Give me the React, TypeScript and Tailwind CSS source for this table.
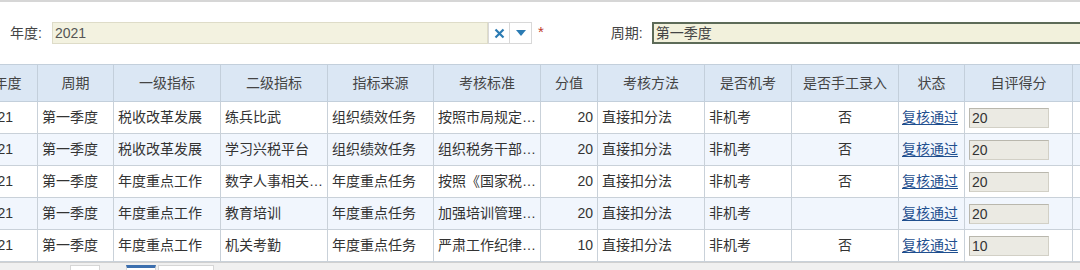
import React from "react";

interface Row {
  period: string;
  level1: string;
  level2: string;
  source: string;
  standard: string;
  score: number;
  method: string;
  machine: string;
  manual: string;
  status: string;
  self: string;
}

const ROWS: Row[] = [
  { period: "第一季度", level1: "税收改革发展", level2: "练兵比武", source: "组织绩效任务", standard: "按照市局规定…", score: 20, method: "直接扣分法", machine: "非机考", manual: "否", status: "复核通过", self: "20" },
  { period: "第一季度", level1: "税收改革发展", level2: "学习兴税平台", source: "组织绩效任务", standard: "组织税务干部…", score: 20, method: "直接扣分法", machine: "非机考", manual: "否", status: "复核通过", self: "20" },
  { period: "第一季度", level1: "年度重点工作", level2: "数字人事相关…", source: "年度重点任务", standard: "按照《国家税…", score: 20, method: "直接扣分法", machine: "非机考", manual: "否", status: "复核通过", self: "20" },
  { period: "第一季度", level1: "年度重点工作", level2: "教育培训", source: "年度重点任务", standard: "加强培训管理…", score: 20, method: "直接扣分法", machine: "非机考", manual: "", status: "复核通过", self: "20" },
  { period: "第一季度", level1: "年度重点工作", level2: "机关考勤", source: "年度重点任务", standard: "严肃工作纪律…", score: 10, method: "直接扣分法", machine: "非机考", manual: "否", status: "复核通过", self: "10" },
];

const HEADERS = ["年度", "周期", "一级指标", "二级指标", "指标来源", "考核标准", "分值", "考核方法", "是否机考", "是否手工录入", "状态", "自评得分", ""];
const WIDTHS = [60, 76, 107, 107, 106, 107, 57, 107, 87, 107, 66, 108, 60];

const FONT = "font-['Liberation_Sans','Noto_Sans_CJK_SC',sans-serif]";

export default function App() {
  return (
    <div className={`w-[1080px] h-[270px] overflow-hidden bg-white border-t-2 border-[#d6d6d6] flex flex-col text-[#333] ${FONT}`}>
      {/* query form */}
      <div className="h-[62px] shrink-0 flex items-center text-[14px]">
        <span className="ml-[10px] w-[42px] text-[#444]">年度:</span>
        <div className="w-[436px] h-[22px] bg-[#f3f2e0] border border-[#dedcc8] flex items-center pl-[2px] text-[14px] text-[#555]">
          2021
        </div>
        <button className="w-[22px] h-[22px] border border-[#d8d8d8] bg-white flex items-center justify-center">
          <svg width="11" height="11" viewBox="0 0 11 11">
            <path d="M1.5 1.5 L9.5 9.5 M9.5 1.5 L1.5 9.5" stroke="#2b7bb3" strokeWidth="2.2" />
          </svg>
        </button>
        <button className="w-[22px] h-[22px] border border-l-0 border-[#d8d8d8] bg-white flex items-center justify-center">
          <svg width="10" height="6" viewBox="0 0 10 6">
            <path d="M0 0 H10 L5 6 Z" fill="#2b7bb3" />
          </svg>
        </button>
        <span className="ml-[6px] text-[#c0392b] text-[15px] leading-none -mt-[4px]">*</span>
        <span className="ml-[67px] w-[41px] text-[#444]">周期:</span>
        <div className="flex-1 h-[22px] bg-[#f2f1dc] border-2 border-r-0 border-[#5d6b58] flex items-center pl-[2px] text-[14px] text-[#444]">
          第一季度
        </div>
      </div>

      {/* grid */}
      <div className="overflow-hidden shrink-0">
        <table className="table-fixed border-collapse ml-[-23px] text-[14px]" style={{ width: WIDTHS.reduce((a, b) => a + b, 0) }}>
          <colgroup>
            {WIDTHS.map((w, i) => (
              <col key={i} style={{ width: w }} />
            ))}
          </colgroup>
          <thead>
            <tr className="h-[37px] bg-[#dbe7f4]">
              {HEADERS.map((h, i) => (
                <th key={i} className="border border-[#c3cfdb] font-normal text-center text-[#444] whitespace-nowrap">
                  {h}
                </th>
              ))}
            </tr>
          </thead>
          <tbody>
            {ROWS.map((r, i) => (
              <tr key={i} className={`h-[32px] ${i % 2 === 1 ? "bg-[#f1f6fd]" : "bg-white"}`}>
                <td className="border border-[#c9d1d9] px-[4px]">2021</td>
                <td className="border border-[#c9d1d9] px-[4px] whitespace-nowrap">{r.period}</td>
                <td className="border border-[#c9d1d9] px-[4px] whitespace-nowrap">{r.level1}</td>
                <td className="border border-[#c9d1d9] px-[4px] whitespace-nowrap overflow-hidden">{r.level2}</td>
                <td className="border border-[#c9d1d9] px-[4px] whitespace-nowrap">{r.source}</td>
                <td className="border border-[#c9d1d9] px-[4px] whitespace-nowrap overflow-hidden">{r.standard}</td>
                <td className="border border-[#c9d1d9] px-[4px] text-right">{r.score}</td>
                <td className="border border-[#c9d1d9] px-[4px] whitespace-nowrap">{r.method}</td>
                <td className="border border-[#c9d1d9] px-[4px] whitespace-nowrap">{r.machine}</td>
                <td className="border border-[#c9d1d9] px-[4px] text-center">{r.manual}</td>
                <td className="border border-[#c9d1d9] px-[3px] whitespace-nowrap">
                  <a className="text-[#1f4f8f] underline underline-offset-2">{r.status}</a>
                </td>
                <td className="border border-[#c9d1d9] px-[4px]">
                  <div className="w-[80px] h-[20px] bg-[#ebeae3] border border-[#d2d0c6] border-t-[#b9b7ad] border-l-[#b9b7ad] flex items-end pl-[2px] text-[14px] leading-[17px] text-[#333]">
                    {r.self}
                  </div>
                </td>
                <td className="border border-[#c9d1d9]"></td>
              </tr>
            ))}
          </tbody>
        </table>
      </div>

      {/* pager strip */}
      <div className="flex-1 bg-[#f0f0f0] border-t border-[#d0d0d0] flex items-start pt-[2px]">
        <div className="ml-[70px] w-[30px] h-[10px] bg-white border border-[#d6d6d6]" />
        <div className="ml-[26px] w-[30px] h-[10px] bg-white border border-[#d6d6d6] border-t-[3px] border-t-[#3c6fae]" />
        <div className="ml-[2px] w-[56px] h-[10px] bg-white border border-[#d6d6d6]" />
      </div>
    </div>
  );
}
